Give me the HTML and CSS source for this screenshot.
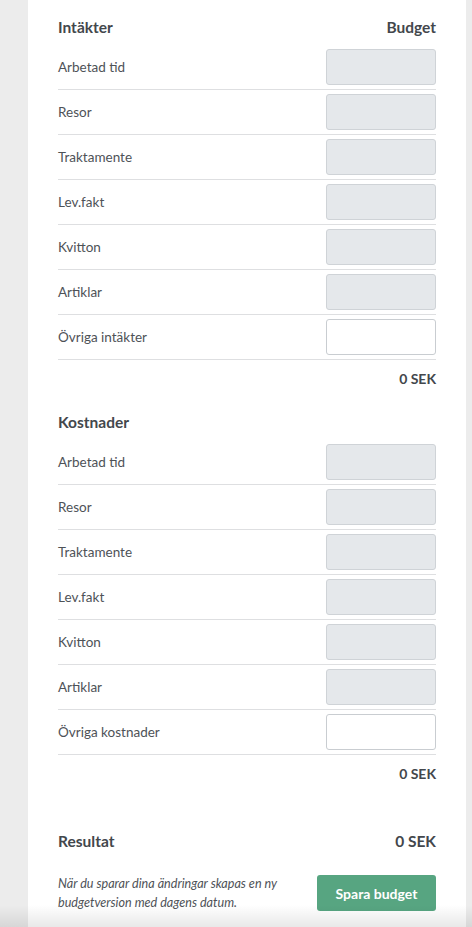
FILE: index.html
```html
<!DOCTYPE html>
<html lang="sv">
<head>
<meta charset="utf-8">
<link rel="stylesheet" href="styles.css">
</head>
<body>
<div class="page">
  <div class="panel">
    <section class="group">
      <div class="group-head"><span>Intäkter</span><span>Budget</span></div>
      <div class="row"><span class="label">Arbetad tid</span><input class="field disabled" disabled></div>
      <div class="row"><span class="label">Resor</span><input class="field disabled" disabled></div>
      <div class="row"><span class="label">Traktamente</span><input class="field disabled" disabled></div>
      <div class="row"><span class="label">Lev.fakt</span><input class="field disabled" disabled></div>
      <div class="row"><span class="label">Kvitton</span><input class="field disabled" disabled></div>
      <div class="row"><span class="label">Artiklar</span><input class="field disabled" disabled></div>
      <div class="row"><span class="label">Övriga intäkter</span><input class="field"></div>
      <div class="sum">0 SEK</div>
    </section>
    <section class="group">
      <div class="group-head"><span>Kostnader</span></div>
      <div class="row"><span class="label">Arbetad tid</span><input class="field disabled" disabled></div>
      <div class="row"><span class="label">Resor</span><input class="field disabled" disabled></div>
      <div class="row"><span class="label">Traktamente</span><input class="field disabled" disabled></div>
      <div class="row"><span class="label">Lev.fakt</span><input class="field disabled" disabled></div>
      <div class="row"><span class="label">Kvitton</span><input class="field disabled" disabled></div>
      <div class="row"><span class="label">Artiklar</span><input class="field disabled" disabled></div>
      <div class="row"><span class="label">Övriga kostnader</span><input class="field"></div>
      <div class="sum">0 SEK</div>
    </section>
    <div class="result"><span>Resultat</span><span>0 SEK</span></div>
    <div class="footer">
      <p class="note">När du sparar dina ändringar skapas en ny budgetversion med dagens datum.</p>
      <button class="save">Spara budget</button>
    </div>
  </div>
  <div class="fade"></div>
</div>
</body>
</html>
```

FILE: styles.css
```css
* { box-sizing: border-box; }
html, body { margin: 0; padding: 0; }
body {
  background: #ececec;
  font-family: Lato, "Open Sans", sans-serif;
  color: #4b4f54;
  width: 472px;
  height: 927px;
  overflow: hidden;
}
.page {
  position: relative;
  height: 927px;
  padding-left: 28px;
  padding-right: 6px;
}
.panel {
  background: #fff;
  height: 927px;
  padding: 18px 30px 0 30px;
}
.group-head {
  display: flex;
  justify-content: space-between;
  font-weight: 700;
  font-size: 15.5px;
  color: #43474c;
  height: 27px;
  line-height: 18px;
}
.row {
  display: flex;
  align-items: center;
  justify-content: space-between;
  height: 45px;
  border-bottom: 1px solid #dedfe1;
}
.label {
  font-size: 13.5px;
  color: #4e5257;
}
.field {
  width: 110px;
  height: 36px;
  border: 1px solid #c9cdd1;
  border-radius: 3px;
  background: #fff;
  font: inherit;
  margin: 0;
}
.field.disabled {
  background: #e5e8eb;
  border-color: #cfd3d7;
}
.sum {
  text-align: right;
  font-weight: 700;
  font-size: 14px;
  color: #43474c;
  height: 37px;
  line-height: 38px;
}
.group + .group { margin-top: 16px; }
.result {
  display: flex;
  justify-content: space-between;
  font-weight: 700;
  font-size: 15.5px;
  color: #43474c;
  margin-top: 39px;
  line-height: 20px;
}
.footer {
  display: flex;
  justify-content: space-between;
  align-items: center;
  margin-top: 23px;
}
.note {
  margin: 0;
  font-style: italic;
  font-size: 12.6px;
  line-height: 19px;
  color: #4e5257;
  width: 245px;
}
.save {
  width: 119px;
  height: 36px;
  background: #57a581;
  color: #fff;
  border: none;
  border-radius: 3px;
  font: inherit;
  font-weight: 700;
  font-size: 14px;
}
.fade {
  position: absolute;
  left: 0;
  right: 0;
  bottom: 0;
  height: 22px;
  background: linear-gradient(to bottom, rgba(0,0,0,0), rgba(0,0,0,0.09));
}
```
